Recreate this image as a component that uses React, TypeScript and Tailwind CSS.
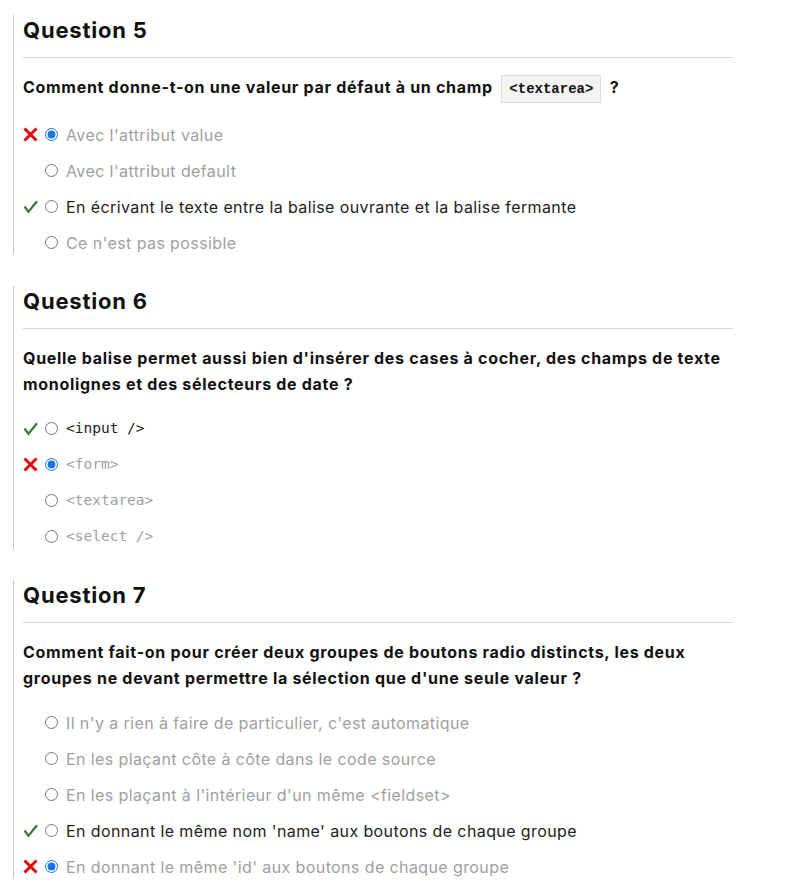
import React from 'react';

type Mark = 'right' | 'wrong' | null;

type Option = {
    label: string;
    mark: Mark;
    checked?: boolean;
    correct?: boolean;
};

type Question = {
    num: number;
    text: React.ReactNode;
    mono?: boolean;
    options: Option[];
};

const questions: Question[] = [
    {
        num: 5,
        text: (
            <>
                Comment donne-t-on une valeur par défaut à un champ{' '}
                <code className="mx-[4px] inline-block border border-[#dcdcdc] bg-[#f3f3f3] px-[7px] align-middle font-['Liberation_Mono',monospace] text-[14px] font-bold leading-[26px] tracking-normal">
                    &lt;textarea&gt;
                </code>{' '}
                ?
            </>
        ),
        options: [
            { label: "Avec l'attribut value", mark: 'wrong', checked: true },
            { label: "Avec l'attribut default", mark: null },
            { label: 'En écrivant le texte entre la balise ouvrante et la balise fermante', mark: 'right', correct: true },
            { label: "Ce n'est pas possible", mark: null },
        ],
    },
    {
        num: 6,
        text: "Quelle balise permet aussi bien d'insérer des cases à cocher, des champs de texte monolignes et des sélecteurs de date ?",
        mono: true,
        options: [
            { label: '<input />', mark: 'right', correct: true },
            { label: '<form>', mark: 'wrong', checked: true },
            { label: '<textarea>', mark: null },
            { label: '<select />', mark: null },
        ],
    },
    {
        num: 7,
        text: "Comment fait-on pour créer deux groupes de boutons radio distincts, les deux groupes ne devant permettre la sélection que d'une seule valeur ?",
        options: [
            { label: "Il n'y a rien à faire de particulier, c'est automatique", mark: null },
            { label: 'En les plaçant côte à côte dans le code source', mark: null },
            { label: "En les plaçant à l'intérieur d'un même <fieldset>", mark: null },
            { label: "En donnant le même nom 'name' aux boutons de chaque groupe", mark: 'right', correct: true },
            { label: "En donnant le même 'id' aux boutons de chaque groupe", mark: 'wrong', checked: true },
        ],
    },
];

function Cross() {
    return (
        <svg width="15" height="15" viewBox="0 0 15 15">
            <path d="M1.5 1.5 L13.5 13.5 M13.5 1.5 L1.5 13.5" stroke="#dd0b0b" strokeWidth="3" />
        </svg>
    );
}

function Check() {
    return (
        <svg width="15" height="15" viewBox="0 0 15 15">
            <path d="M1.5 7.5 L5.5 12.8 L14 2.2" stroke="#2d7a3a" strokeWidth="2.2" fill="none" />
        </svg>
    );
}

function QuestionBlock({ q }: { q: Question }) {
    return (
        <section className="ml-[13px] w-[720px] border-l border-[#c8c8c8] pl-[9px] [&+&]:mt-[31px]">
            <h2 className="h-[30px] text-[22px] leading-[30px] font-bold tracking-[0.8px] text-[#111]">
                Question {q.num}
            </h2>
            <hr className="mt-[12px] border-t border-[#d6d6d6]" />
            <p className="mt-[16px] text-[16px] leading-[26px] font-bold tracking-[0.7px] text-[#111]">{q.text}</p>
            <div className="mt-[20px] flex flex-col gap-[12px]">
                {q.options.map((o, i) => (
                    <label key={i} className="flex h-[24px] items-center">
                        <span className="flex w-[15px] justify-center">
                            {o.mark === 'wrong' && <Cross />}
                            {o.mark === 'right' && <Check />}
                        </span>
                        <input
                            type="radio"
                            name={`q${q.num}`}
                            defaultChecked={o.checked}
                            className="ml-[7px] h-[13px] w-[13px] accent-[#1a73e8]"
                        />
                        <span
                            className={
                                'ml-[8px] ' +
                                (q.mono
                                    ? "font-['DejaVu_Sans_Mono',monospace] text-[14.5px] "
                                    : 'text-[16px] tracking-[0.4px] ') +
                                (o.correct ? 'text-[#222]' : 'text-[#a0a0a0]')
                            }
                        >
                            {o.label}
                        </span>
                    </label>
                ))}
            </div>
        </section>
    );
}

export default function App() {
    return (
        <div className="min-h-screen bg-white pt-[15px] font-['Inter',sans-serif]">
            {questions.map((q) => (
                <QuestionBlock key={q.num} q={q} />
            ))}
        </div>
    );
}
